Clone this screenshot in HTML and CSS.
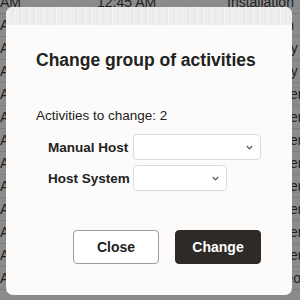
FILE: index.html
```html
<!DOCTYPE html>
<html lang="en">
    <head>
        <meta charset="utf-8" />
        <title>Change group of activities</title>
        <link rel="stylesheet" href="styles.css">
    </head>
    <body>
        <div class="table">
            <div class="row"><span class="c1">AM</span><span class="c2">12:45 AM</span><span class="c3">Installation</span></div>
            <div class="row"><span class="c1">AM</span><span class="c2"></span><span class="c3">Installation</span></div>
            <div class="row"><span class="c1">AM</span><span class="c2"></span><span class="c3">Emergency</span></div>
            <div class="row"><span class="c1">AM</span><span class="c2"></span><span class="c3">Emergency</span></div>
            <div class="row"><span class="c1">AM</span><span class="c2"></span><span class="c3">Replacement</span></div>
            <div class="row"><span class="c1">AM</span><span class="c2"></span><span class="c3">Replacement</span></div>
            <div class="row"><span class="c1">AM</span><span class="c2"></span><span class="c3">Replacement</span></div>
            <div class="row"><span class="c1">AM</span><span class="c2"></span><span class="c3">Replacement</span></div>
            <div class="row"><span class="c1">AM</span><span class="c2"></span><span class="c3">Replacement</span></div>
            <div class="row"><span class="c1">AM</span><span class="c2"></span><span class="c3">Replacement</span></div>
            <div class="row"><span class="c1">AM</span><span class="c2"></span><span class="c3">Replacement</span></div>
            <div class="row"><span class="c1">AM</span><span class="c2"></span><span class="c3">Replacement</span></div>
            <div class="row"><span class="c1">AM</span><span class="c2">08:45 AM</span><span class="c3">Miscellaneous</span></div>
        </div>

        <div class="modal">
            <div class="modal-top"></div>
            <div class="modal-body">
                <h2 class="title">Change group of activities</h2>
                <p class="count">Activities to change: 2</p>
                <div class="fields">
                    <label>Manual Host</label>
                    <div class="select wide">
                        <svg width="7" height="5" viewBox="0 0 7 5"><path d="M0.8 1 L3.5 3.8 L6.2 1" fill="none" stroke="#555" stroke-width="1.2"/></svg>
                    </div>
                    <label>Host System</label>
                    <div class="select narrow">
                        <svg width="7" height="5" viewBox="0 0 7 5"><path d="M0.8 1 L3.5 3.8 L6.2 1" fill="none" stroke="#555" stroke-width="1.2"/></svg>
                    </div>
                </div>
                <div class="actions">
                    <button class="btn btn-close">Close</button>
                    <button class="btn btn-change">Change</button>
                </div>
            </div>
        </div>
    </body>
</html>
```

FILE: styles.css
```css
* { margin: 0; padding: 0; box-sizing: border-box; }
html, body { width: 300px; height: 300px; overflow: hidden; }
body { font-family: "Liberation Sans", Arial, sans-serif; background: #8b8b8b; color: #1e1e1e; position: relative; }

.table { margin-top: -9px; }
.table .row { display: flex; height: 23px; line-height: 22px; font-size: 14px; border-bottom: 1px solid #7c7c7c; white-space: nowrap; overflow: hidden; }
.table .c1 { width: 22px; flex: none; }
.table .c2 { margin-left: 75px; width: 130px; flex: none; }
.table .c3 { flex: 1; min-width: 0; overflow: hidden; }

.modal { position: absolute; left: 6px; top: 7px; width: 286px; height: 288px; background: #fcfbf9; border-radius: 7px; overflow: hidden; display: flex; flex-direction: column; }
.modal-top { height: 18px; background: repeating-linear-gradient(90deg, #e8e8e8 0, #f4f4f4 2px, #ebebeb 3px, #f0f0f0 5px, #e6e6e6 7px); }
.modal-body { padding: 25px 31px 0 30px; }

.title { font-size: 17.5px; line-height: 20px; font-weight: 700; color: #222; }
.count { margin-top: 38px; font-size: 13.5px; line-height: 16px; color: #222; }

.fields { display: grid; grid-template-columns: 80px auto; column-gap: 5px; row-gap: 5px; margin-top: 10px; padding-left: 12px; align-items: center; }
.fields label { font-size: 13.5px; font-weight: 700; color: #222; white-space: nowrap; }
.select { height: 26px; border: 1px solid #dcdcdc; border-radius: 4px; background: #fff; display: flex; align-items: center; justify-content: flex-end; padding-right: 7px; }
.select.wide { width: 128px; }
.select.narrow { width: 94px; }

.actions { display: flex; justify-content: flex-end; gap: 16px; margin-top: 39px; }
.btn { width: 86px; height: 34px; border-radius: 4px; font-family: "Liberation Sans", Arial, sans-serif; font-size: 14px; font-weight: 700; }
.btn-close { background: #fff; border: 1px solid #9a9a9a; color: #222; }
.btn-change { background: #2e2a27; border: 1px solid #2e2a27; color: #fff; }
```
